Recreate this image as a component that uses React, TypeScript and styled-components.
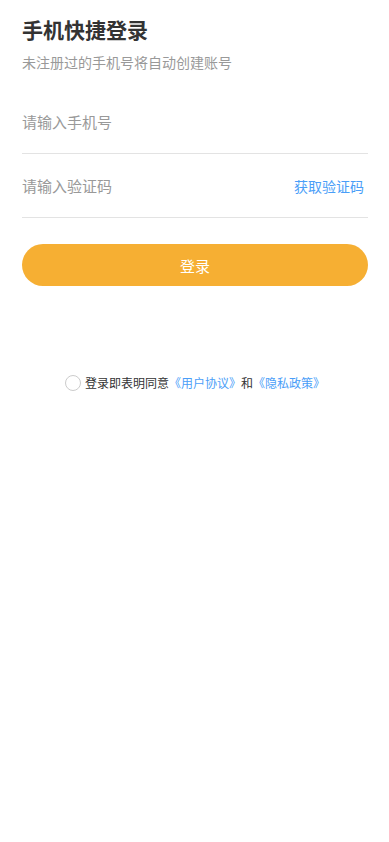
import * as React from "react";
import styled, { createGlobalStyle } from "styled-components";

const GlobalStyle = createGlobalStyle`
  html, body {
    margin: 0;
    padding: 0;
    background: #ffffff;
  }
  body {
    font-family: "Noto Sans CJK SC", "Noto Sans", sans-serif;
  }
`;

const Page = styled.div`
  min-height: 842px;
  padding: 14px 21px 0 22px;
  box-sizing: border-box;
  display: flex;
  flex-direction: column;
`;

const Title = styled.h1`
  margin: 0;
  font-size: 21px;
  line-height: 30px;
  font-weight: 700;
  color: #333333;
`;

const SubTitle = styled.p`
  margin: 0;
  margin-top: 11px;
  font-size: 14px;
  line-height: 14px;
  color: #999999;
`;

const Form = styled.div`
  margin-top: 21px;
  display: flex;
  flex-direction: column;
`;

const Field = styled.div`
  height: 64px;
  box-sizing: border-box;
  border-bottom: 1px solid #e3e3e3;
  display: flex;
  align-items: center;
  justify-content: space-between;
`;

const Input = styled.input`
  flex: 1;
  border: none;
  outline: none;
  padding: 0;
  font-family: inherit;
  font-size: 15px;
  color: #333333;
  background: transparent;
  &::placeholder {
    color: #999999;
  }
`;

const CodeLink = styled.span`
  font-size: 14px;
  color: #4a9ef8;
  margin-right: 4px;
`;

const LoginButton = styled.button`
  margin-top: 26px;
  height: 42px;
  border: none;
  border-radius: 21px;
  background-color: #f6af33;
  color: #ffffff;
  font-family: inherit;
  font-size: 15px;
  cursor: pointer;
`;

const Agreement = styled.div`
  margin-top: 88px;
  display: flex;
  align-items: center;
  justify-content: center;
  font-size: 12px;
  color: #333333;
`;

const Radio = styled.span`
  width: 14px;
  height: 14px;
  border: 1px solid #cccccc;
  border-radius: 50%;
  margin-right: 4px;
`;

const Link = styled.span`
  color: #4a9ef8;
`;

export default function App() {
  return (
    <>
      <GlobalStyle />
      <Page>
        <Title>手机快捷登录</Title>
        <SubTitle>未注册过的手机号将自动创建账号</SubTitle>
        <Form>
          <Field>
            <Input placeholder="请输入手机号" />
          </Field>
          <Field>
            <Input placeholder="请输入验证码" />
            <CodeLink>获取验证码</CodeLink>
          </Field>
        </Form>
        <LoginButton>登录</LoginButton>
        <Agreement>
          <Radio />
          登录即表明同意<Link>《用户协议》</Link>和<Link>《隐私政策》</Link>
        </Agreement>
      </Page>
    </>
  );
}
